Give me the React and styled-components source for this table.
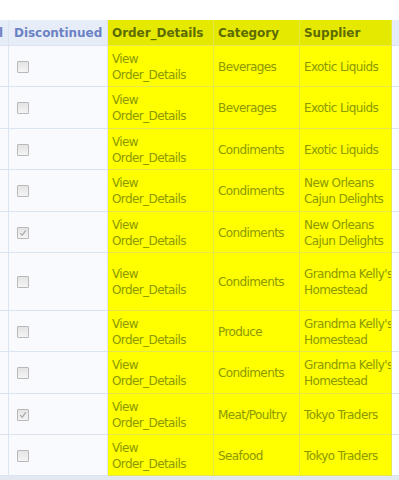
import React from "react";
import styled, { createGlobalStyle, css } from "styled-components";

const GlobalStyle = createGlobalStyle`
  html, body {
    margin: 0;
    padding: 0;
    background: #ffffff;
  }
  body {
    font-family: "DejaVu Sans", Verdana, sans-serif;
  }
`;

const rows = [
  { category: "Beverages", supplier: ["Exotic Liquids"], checked: false, h: 41 },
  { category: "Beverages", supplier: ["Exotic Liquids"], checked: false, h: 42 },
  { category: "Condiments", supplier: ["Exotic Liquids"], checked: false, h: 41 },
  { category: "Condiments", supplier: ["New Orleans", "Cajun Delights"], checked: false, h: 42 },
  { category: "Condiments", supplier: ["New Orleans", "Cajun Delights"], checked: true, h: 41 },
  { category: "Condiments", supplier: ["Grandma Kelly's", "Homestead"], checked: false, h: 58 },
  { category: "Produce", supplier: ["Grandma Kelly's", "Homestead"], checked: false, h: 41 },
  { category: "Condiments", supplier: ["Grandma Kelly's", "Homestead"], checked: false, h: 42 },
  { category: "Meat/Poultry", supplier: ["Tokyo Traders"], checked: true, h: 41 },
  { category: "Seafood", supplier: ["Tokyo Traders"], checked: false, h: 41 },
];

function App() {
  return (
    <>
      <GlobalStyle />
      <Page>
        <Grid>
          <HeaderRow>
            <HeadCell $align="right">ReorderLevel</HeadCell>
            <HeadCell $pad={5}>Discontinued</HeadCell>
            <HeadCell $hl>Order_Details</HeadCell>
            <HeadCell $hl>Category</HeadCell>
            <HeadCell $hl>Supplier</HeadCell>
            <HeadCell $last />
          </HeaderRow>
          {rows.map((r, i) => (
            <Row key={i} style={{ height: r.h }}>
              <Cell />
              <Cell $pad={8}>
                <CheckBox $checked={r.checked}>
                  {r.checked && (
                    <svg width="8" height="8" viewBox="0 0 8 8">
                      <path d="M1.2 4.2 L3.2 6.4 L6.8 1.4" fill="none" stroke="#a9a9a9" strokeWidth="1.2" />
                    </svg>
                  )}
                </CheckBox>
              </Cell>
              <Cell $hl>
                <Lines>
                  <span>View</span>
                  <span>Order_Details</span>
                </Lines>
              </Cell>
              <Cell $hl>{r.category}</Cell>
              <Cell $hl>
                <Lines>
                  {r.supplier.map((s) => (
                    <span key={s}>{s}</span>
                  ))}
                </Lines>
              </Cell>
              <Cell $last />
            </Row>
          ))}
        </Grid>
        <Footer />
      </Page>
    </>
  );
}

export default App;

const columns = "91px 99px 106px 86px 92px 1fr";

const Page = styled.div`
  width: 399px;
  height: 480px;
  overflow: hidden;
  padding-top: 20px;
  box-sizing: border-box;
  display: flex;
  flex-direction: column;
`;

const Grid = styled.div`
  display: flex;
  flex-direction: column;
  margin-left: -82px;
  width: 520px;
`;

const HeaderRow = styled.div`
  display: grid;
  grid-template-columns: ${columns};
  height: 26px;
`;

const Row = styled.div`
  display: grid;
  grid-template-columns: ${columns};
`;

const baseCell = css`
  box-sizing: border-box;
  display: flex;
  align-items: center;
  justify-content: ${(p) => (p.$align === "right" ? "flex-end" : "flex-start")};
  padding: 0 ${(p) => (p.$align === "right" ? 5 : 0)}px 0 ${(p) => p.$pad ?? 4}px;
  border-bottom: 1px solid ${(p) => (p.$hl ? "#e4e74e" : "#dbe4f1")};
  border-right: 1px solid ${(p) => (p.$hl ? "#e4e74e" : p.$last ? "transparent" : "#dbe4f1")};
  white-space: nowrap;
  overflow: hidden;
`;

const HeadCell = styled.div`
  ${baseCell};
  font-weight: bold;
  font-size: 12px;
  letter-spacing: -0.05px;
  background: ${(p) => (p.$hl ? "#e5e900" : "#e6edf8")};
  color: ${(p) => (p.$hl ? "#5d6b00" : "#6b82c4")};
`;

const Cell = styled.div`
  ${baseCell};
  font-size: 12px;
  letter-spacing: -0.6px;
  line-height: 16px;
  padding-top: 1px;
  background: ${(p) => (p.$hl ? "#ffff00" : p.$last ? "#fdfeff" : "#f8fafd")};
  color: ${(p) => (p.$hl ? "#8c9900" : "#555555")};
`;

const Lines = styled.div`
  display: flex;
  flex-direction: column;
`;

const CheckBox = styled.span`
  width: 12px;
  height: 12px;
  box-sizing: border-box;
  border: 1px solid #b9b9b9;
  border-radius: 1px;
  background: linear-gradient(#e4e4e4, #f4f4f4);
  display: flex;
  align-items: center;
  justify-content: center;
`;

const Footer = styled.div`
  height: 5px;
  background: #e3e8f0;
`;
